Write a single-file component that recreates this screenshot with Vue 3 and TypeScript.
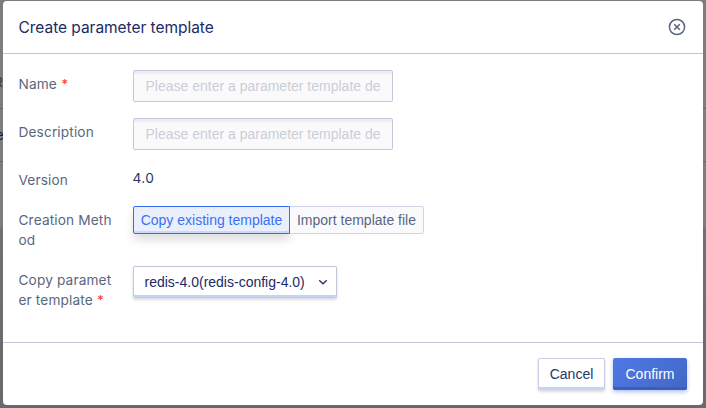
<script setup lang="ts">
import { ref } from 'vue'

const name = ref('')
const description = ref('')
const method = ref('copy')
const placeholder = 'Please enter a parameter template description'
const methods = [
  { id: 'copy', label: 'Copy existing template' },
  { id: 'import', label: 'Import template file' },
]
</script>

<template>
  <div class="backdrop">
    <div class="behind">
      <div class="row head">R</div>
      <div class="row link">e</div>
      <div class="row rest"></div>
    </div>
    <section class="modal" role="dialog">
      <header>
        <h1>Create parameter template</h1>
        <button class="close" type="button" aria-label="Close">
          <svg width="18" height="18" viewBox="0 0 18 18" fill="none" stroke="#5a6780">
            <circle cx="9" cy="9" r="7.6" stroke-width="1.5" />
            <path d="M6.2 6.2L11.8 11.8M11.8 6.2L6.2 11.8" stroke-width="1.6" />
          </svg>
        </button>
      </header>
      <main>
        <div class="field">
          <label>Name <i>*</i></label>
          <input v-model="name" type="text" :placeholder="placeholder" />
        </div>
        <div class="field">
          <label>Description</label>
          <input v-model="description" type="text" :placeholder="placeholder" />
        </div>
        <div class="field version">
          <label>Version</label>
          <span class="value">4.0</span>
        </div>
        <div class="field method">
          <label>Creation Method</label>
          <div class="group">
            <button
              v-for="m in methods"
              :key="m.id"
              type="button"
              :class="['option', m.id, { active: method === m.id }]"
              @click="method = m.id"
            >{{ m.label }}</button>
          </div>
        </div>
        <div class="field source">
          <label>Copy parameter template <i>*</i></label>
          <button class="select" type="button">
            <span>redis-4.0(redis-config-4.0)</span>
            <svg width="10" height="8" viewBox="0 0 10 8" fill="none" stroke="#26366b" stroke-width="1.3">
              <path d="M1.2 2.2L5 5.8L8.8 2.2" />
            </svg>
          </button>
        </div>
      </main>
      <footer>
        <button class="cancel" type="button">Cancel</button>
        <button class="confirm" type="button">Confirm</button>
      </footer>
    </section>
  </div>
</template>

<style>
body {
  margin: 0;
  overflow: hidden;
}
</style>

<style scoped>
* {
  box-sizing: border-box;
}
button,
input {
  font: 14px/20px 'Liberation Sans', Arial, sans-serif;
  margin: 0;
}
.backdrop {
  position: relative;
  height: 408px;
  padding: 1px 3px 3px;
  background: linear-gradient(#7d7d7d 0, #7d7d7d 227px, #707075 228px, #69696d 100%);
  overflow: hidden;
  font-family: Inter, sans-serif;
}
.behind {
  position: absolute;
  inset: 0;
  padding-top: 56px;
}
.row {
  height: 53px;
  border-bottom: 1px solid #62646e;
  font: 14px/53px 'Liberation Sans', sans-serif;
  text-indent: -7px;
  color: #303744;
}
.link {
  color: #111a44;
  text-indent: -4px;
}
.rest {
  border: 0;
}
.modal {
  position: relative;
  display: flex;
  flex-direction: column;
  width: 700px;
  height: 404px;
  background: #fff;
  border-radius: 4px;
}
header {
  display: flex;
  align-items: center;
  justify-content: space-between;
  height: 53px;
  padding: 0 17px 0 15.5px;
  border-bottom: 1px solid #c1c6dc;
}
h1 {
  margin: 0;
  padding-top: 2px;
  font-size: 15.5px;
  font-weight: 400;
  line-height: 24px;
  letter-spacing: -0.04px;
  color: #1b2b65;
}
.close {
  display: flex;
  padding: 0;
  border: 0;
  background: none;
}
main {
  flex: 1;
  padding: 16px 15.5px;
}
.field {
  display: flex;
  align-items: flex-start;
  height: 48px;
}
label {
  width: 96px;
  margin-right: 18.5px;
  padding-top: 4px;
  font-size: 13.7px;
  line-height: 20px;
  letter-spacing: 0.12px;
  word-break: break-all;
  color: #59677d;
}
label i {
  margin-left: 0.5px;
  font-size: 12.5px;
  font-style: normal;
  font-weight: 500;
  line-height: 1;
  color: #f5382b;
}
input {
  width: 260px;
  height: 32px;
  padding: 0 11.5px;
  border: 1px solid #c1c8dc;
  border-radius: 2px;
  background: #fafafd;
  box-shadow: inset 0 3px 0 #ededf1;
  color: #1b2b65;
  outline: 0;
}
input::placeholder {
  color: #cbced6;
  opacity: 1;
}
.version {
  height: 40px;
}
.value {
  margin-left: -0.5px;
  padding-top: 2px;
  font-size: 13.7px;
  line-height: 20px;
  letter-spacing: 0.4px;
  color: #26366b;
}
.method {
  height: 60px;
}
.group {
  display: flex;
}
.option {
  height: 28px;
  padding: 0;
  white-space: nowrap;
  border: 1px solid #d2d3e8;
  background: #fafafd;
  color: #59677d;
}
.option.copy {
  width: 157px;
  border-radius: 2px 0 0 2px;
}
.option.import {
  width: 134px;
  border-left: 0;
  border-radius: 0 2px 2px 0;
}
.option.active {
  border-color: #326eef;
  background: #e9effd;
  color: #3b70f3;
  box-shadow: inset 0 -2px 0 #cbd8f8, 0 6px 10px rgba(0, 0, 0, 0.13);
}
.select {
  display: flex;
  align-items: center;
  justify-content: space-between;
  width: 204px;
  height: 32px;
  padding: 0 8px 0 10.5px;
  border: 1px solid #c1c8dc;
  border-bottom-color: #bccbef;
  border-radius: 2px;
  background: #fff;
  box-shadow: inset 0 -2px 0 #c3d3fa, 0 2px 3px rgba(0, 0, 0, 0.15);
  color: #1b2b65;
}
footer {
  display: flex;
  justify-content: flex-end;
  gap: 8px;
  height: 63px;
  padding: 15px 16px;
  border-top: 1px solid #c1c6dc;
}
.cancel,
.confirm {
  height: 32px;
  padding: 0;
  border-radius: 2px;
}
.cancel {
  width: 67px;
  border: 1px solid #c9cde3;
  border-bottom-color: #c3d3fa;
  background: #fff;
  color: #26366b;
  box-shadow: inset 0 -2px 0 #c3d3fa, 0 2px 3px rgba(0, 0, 0, 0.15);
}
.confirm {
  width: 74px;
  border: 0;
  background: linear-gradient(135deg, #5079e7, #4267c4);
  color: #fff;
  box-shadow: inset 0 -3px 0 #3c5fb6, 0 2px 4px rgba(50, 100, 220, 0.4);
}
</style>
